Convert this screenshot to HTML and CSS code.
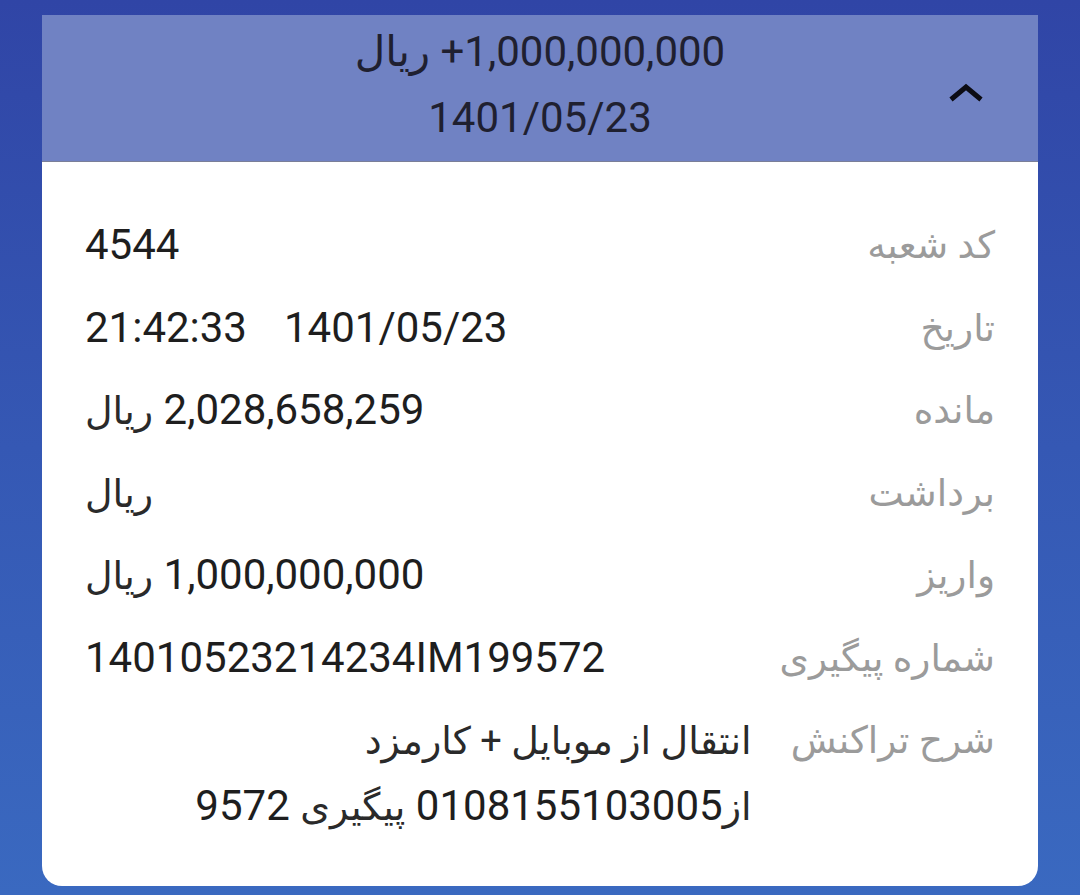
FILE: index.html
```html
<!DOCTYPE html>
<html lang="fa" dir="rtl">
<head>
<meta charset="utf-8">
<link rel="stylesheet" href="styles.css">
</head>
<body>
<div class="page">
  <div class="card">
    <div class="card-head">
      <div class="head-text">
        <div class="head-line">1,000,000,000+ ریال</div>
        <div class="head-line">1401/05/23</div>
      </div>
      <svg class="chevron" width="36" height="20" viewBox="0 0 36 20"><polyline points="3,16.5 18,4 33,16.5" fill="none" stroke="#0c0c14" stroke-width="5"/></svg>
    </div>
    <div class="card-body">
      <div class="row"><div class="label">کد شعبه</div><div class="value ltr">4544</div></div>
      <div class="row"><div class="label">تاریخ</div><div class="value ltr"><span class="time">21:42:33</span><span>1401/05/23</span></div></div>
      <div class="row"><div class="label">مانده</div><div class="value left">2,028,658,259 <span class="fa">ریال</span></div></div>
      <div class="row"><div class="label">برداشت</div><div class="value left"><span class="fa">ریال</span></div></div>
      <div class="row"><div class="label">واریز</div><div class="value left">1,000,000,000 <span class="fa">ریال</span></div></div>
      <div class="row"><div class="label">شماره پیگیری</div><div class="value ltr">14010523214234IM199572</div></div>
      <div class="row"><div class="label">شرح تراکنش</div><div class="value desc"><span class="fa">انتقال از موبایل + کارمزد</span><br><span class="fa">از</span>0108155103005 <span class="fa">پیگیری</span> 9572</div></div>
    </div>
  </div>
</div>
</body>
</html>
```

FILE: styles.css
```css
html, body {
  margin: 0;
  padding: 0;
}
body {
  width: 1080px;
  height: 895px;
  overflow: hidden;
  background: linear-gradient(180deg, #3045a6 0%, #3558b4 50%, #3a69c0 100%);
  font-family: Roboto, "DejaVu Sans", sans-serif;
}
.page {
  padding: 15px 42px 0 42px;
}
.card {
  background: #ffffff;
  border-radius: 0 0 20px 20px;
  overflow: hidden;
}
.card-head {
  background: #7082c3;
  height: 146px;
  border-bottom: 1px solid #7a7f98;
  display: flex;
  align-items: center;
  justify-content: center;
  position: relative;
}
.head-text {
  text-align: center;
  font-size: 42px;
  line-height: 66px;
  color: #1f2030;
  margin-top: -6px;
}
.chevron {
  position: absolute;
  right: 54px;
  top: 68px;
}
.card-body {
  padding: 50px 43px 47px 43px;
  display: grid;
  grid-template-columns: auto 1fr;
  column-gap: 28px;
  row-gap: 16.5px;
}
.row {
  display: contents;
}
.label {
  font-size: 37.5px;
  line-height: 66px;
  color: #9b9b9b;
  white-space: nowrap;
}
.value {
  font-size: 42px;
  line-height: 66px;
  color: #1e1e1e;
  white-space: nowrap;
}
.fa {
  font-size: 38px;
  line-height: 0;
  color: #2a2a2a;
}
.time {
  margin-right: 37px;
}
.ltr {
  direction: ltr;
  text-align: left;
}
.left {
  text-align: left;
}
.desc {
  text-align: right;
}
```
